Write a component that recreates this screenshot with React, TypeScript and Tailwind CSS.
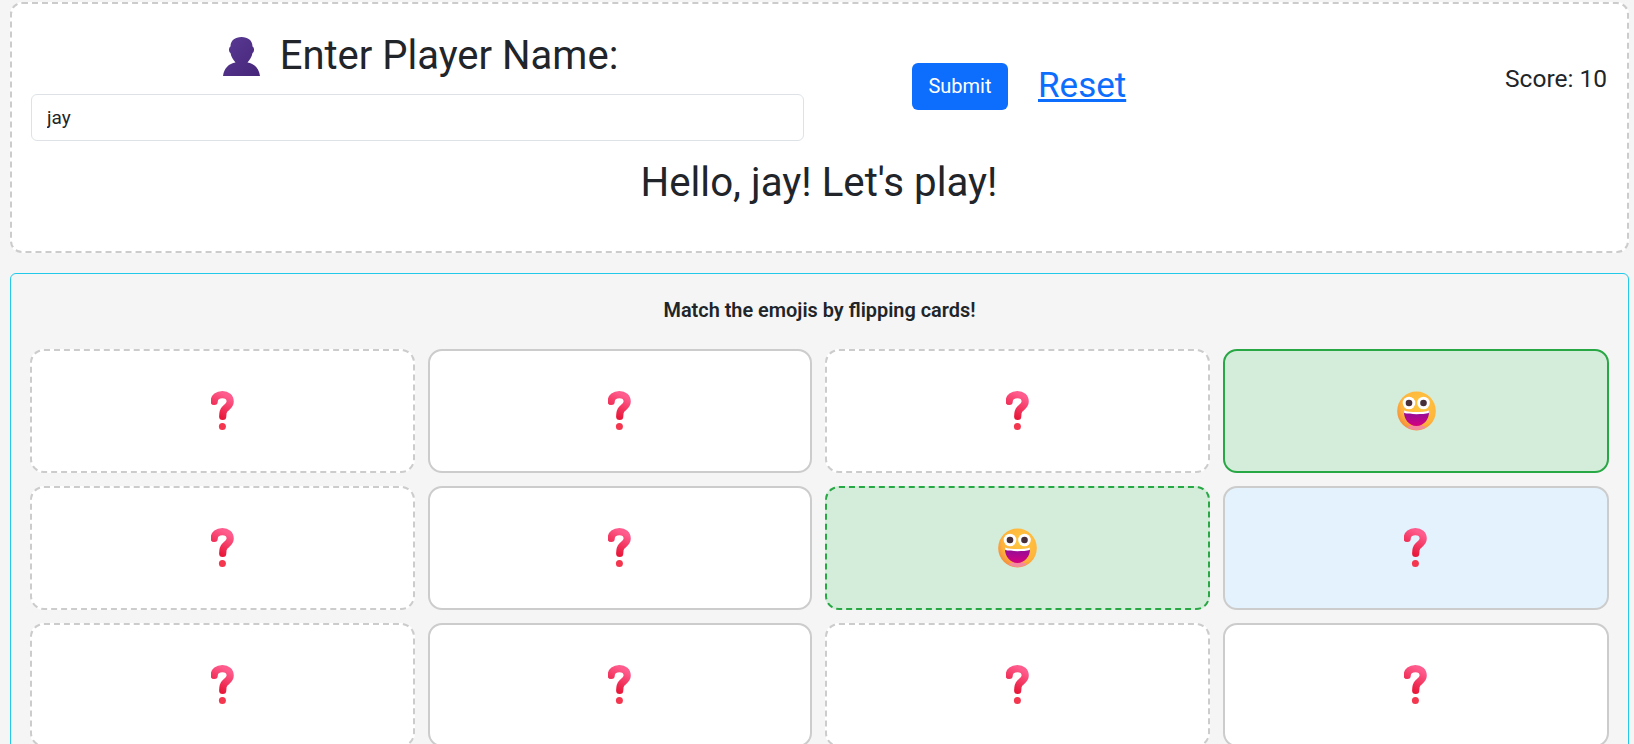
const GRID = [
  { border: "border-dashed", tone: "plain", face: "q" },
  { border: "border-solid", tone: "plain", face: "q" },
  { border: "border-dashed", tone: "plain", face: "q" },
  { border: "border-solid", tone: "match", face: "grin" },
  { border: "border-dashed", tone: "plain", face: "q" },
  { border: "border-solid", tone: "plain", face: "q" },
  { border: "border-dashed", tone: "match", face: "grin" },
  { border: "border-solid", tone: "hover", face: "q" },
  { border: "border-dashed", tone: "plain", face: "q" },
  { border: "border-solid", tone: "plain", face: "q" },
  { border: "border-dashed", tone: "plain", face: "q" },
  { border: "border-solid", tone: "plain", face: "q" },
];

function QuestionIcon() {
  return (
    <svg width="24" height="40" viewBox="0.6 0 24 40" fill="none">
      <defs>
        <linearGradient id="qGrad" x1="0.7" y1="0" x2="0.3" y2="1">
          <stop offset="0" stopColor="#ff5c8e" />
          <stop offset="1" stopColor="#e8183a" />
        </linearGradient>
      </defs>
      <path
        d="M3.8 10.5C3.8 6 7.5 3.6 12 3.6C16.5 3.6 19.8 6.5 19.8 10.5C19.8 14.5 16.5 16 14.5 18C13 19.5 12.3 21.5 12.3 25.5"
        stroke="url(#qGrad)"
        strokeWidth="7.2"
        strokeLinecap="round"
      />
      <circle cx="12" cy="35.5" r="3.5" fill="#f4364f" />
    </svg>
  );
}

function GrinIcon() {
  return (
    <svg width="39" height="40" viewBox="0 0 39 40">
      <defs>
        <radialGradient id="faceGrad" cx="0.6" cy="0.35" r="0.75">
          <stop offset="0" stopColor="#ffc83f" />
          <stop offset="0.65" stopColor="#ffb43c" />
          <stop offset="1" stopColor="#f0803c" />
        </radialGradient>
        <linearGradient id="mouthGrad" x1="0" y1="0" x2="0" y2="1">
          <stop offset="0" stopColor="#8a0f9c" />
          <stop offset="1" stopColor="#d6007f" />
        </linearGradient>
      </defs>
      <ellipse cx="19.5" cy="20" rx="19.3" ry="19.6" fill="url(#faceGrad)" />
      <path d="M10 36C15 40 24 40 29 36L25 34.5L14 34.5Z" fill="#f58a9f" />
      <circle cx="12" cy="12" r="6.3" fill="#fff" />
      <circle cx="26.5" cy="12" r="6.3" fill="#fff" />
      <circle cx="12" cy="12" r="3.3" fill="#47303a" />
      <circle cx="26.5" cy="12" r="3.3" fill="#47303a" />
      <path d="M7 20C13 22 26 22 32 20C32.5 28 27 35 19.5 35C12 35 6.5 28 7 20Z" fill="url(#mouthGrad)" />
      <path d="M7 19.5C13 21.5 26 21.5 32 19.5L31.8 22C26 23.6 13 23.6 7.2 22Z" fill="#fff" />
    </svg>
  );
}

function PersonIcon() {
  return (
    <svg width="37" height="39" viewBox="0 0 37 39" className="shrink-0">
      <defs>
        <linearGradient id="personGrad" x1="0" y1="0" x2="1" y2="1">
          <stop offset="0" stopColor="#5a3a94" />
          <stop offset="1" stopColor="#452679" />
        </linearGradient>
      </defs>
      <path
        d="M18.5 0C25 0 29.5 3.5 29.5 9.5C31.5 10.5 31.5 15 29.5 16C29 20 26.5 23 24.5 25.5C31 26.5 36 31 37 39L0 39C1 31 6 26.5 12.5 25.5C10.5 23 8 20 7.5 16C5.5 15 5.5 10.5 7.5 9.5C7.5 3.5 12 0 18.5 0Z"
        fill="url(#personGrad)"
      />
    </svg>
  );
}

export default function App() {
  return (
    <div className="h-[744px] overflow-hidden bg-[#f5f5f5] pl-[10px] pr-[5px] pt-[2px] font-['Roboto',sans-serif] text-[#212529]">
      <div className="h-[251px] rounded-[12px] border-2 border-dashed border-[#cccccc] bg-white pl-[19px] pr-5 pt-[31px]">
        <div className="flex">
          <div className="w-[773px] shrink-0">
            <div className="flex h-[42px] items-center justify-center gap-5 pl-[6px]">
              <PersonIcon />
              <span className="text-[40px] leading-[48px]">Enter Player Name:</span>
            </div>
            <input
              readOnly
              value="jay"
              className="mt-[17px] block h-[47px] w-full rounded-[6px] border border-[#dee2e6] bg-white px-[15px] text-[19px] text-[#212529] outline-none"
            />
          </div>
          <div className="ml-[108px] mt-[28px] flex h-[47px] items-center">
            <button className="flex h-[47px] w-[96px] items-center justify-center rounded-[6px] bg-[#0d6efd] pb-[2px] text-[20px] text-white">
              Submit
            </button>
            <a href="#" className="ml-[30px] text-[35px] text-[#0d6efd] underline">
              Reset
            </a>
          </div>
          <div className="ml-auto mt-[26px] text-[24.5px] leading-[36px]">Score: 10</div>
        </div>
        <h2 className="mt-[18px] text-center text-[40.25px] leading-[48px]">Hello, jay! Let's play!</h2>
      </div>

      <div className="mt-5 h-[600px] rounded-[6px] border border-[#22c9e8] bg-[#f5f5f5] px-[19px] pt-[23px]">
        <p className="text-center text-[19.9px] font-semibold leading-[27px]">Match the emojis by flipping cards!</p>
        <div className="mt-[25px] grid grid-cols-[385px_384px_385px_1fr] gap-[13px]">
          {GRID.map((card, i) => (
            <div
              key={i}
              className={`flex h-[124px] items-center justify-center rounded-[14px] border-2 ${card.border} ${
                card.tone === "match"
                  ? "border-[#28a745] bg-[#d4edda]"
                  : card.tone === "hover"
                    ? "border-[#cccccc] bg-[#e3f2fd]"
                    : "border-[#cccccc] bg-white"
              }`}
            >
              {card.face === "grin" ? <GrinIcon /> : <QuestionIcon />}
            </div>
          ))}
        </div>
      </div>
    </div>
  );
}
